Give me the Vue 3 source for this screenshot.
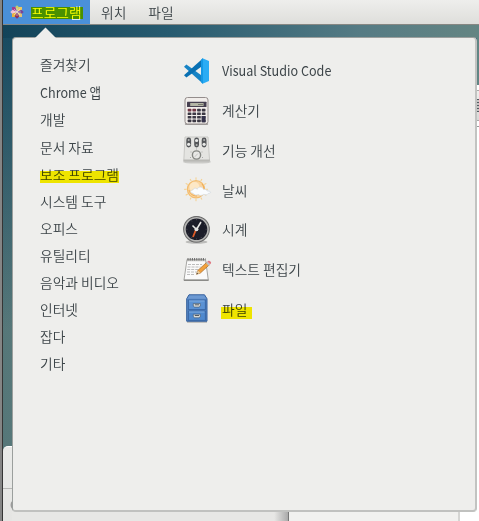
<script setup>
const categories = ['즐겨찾기', 'Chrome 앱', '개발', '문서 자료', '보조 프로그램', '시스템 도구', '오피스', '유틸리티', '음악과 비디오', '인터넷', '잡다', '기타']
const apps = [
  { id: 'code', name: 'Visual Studio Code' },
  { id: 'calc', name: '계산기' },
  { id: 'tweaks', name: '기능 개선' },
  { id: 'weather', name: '날씨' },
  { id: 'clock', name: '시계' },
  { id: 'editor', name: '텍스트 편집기' },
  { id: 'files', name: '파일' },
]
const grid = [0, 1, 2, 3]
const ticks = [0, 30, 60, 90, 120, 150, 180, 210, 240, 270, 300, 330]
const isLatin = (name) => /[A-Za-z]/.test(name)
</script>

<template>
  <div class="screen">
    <div class="edge"></div>
    <header class="topbar">
      <div class="menu-button active">
        <svg class="logo" viewBox="0 0 14 14">
          <path d="M7 .3 9.3 2.6 7 6 4.7 2.6z" fill="#c0d071" />
          <path d="M2 2h3.3L7 7 2 5.3z" fill="#a33d91" />
          <path d="M12 2v3.3L7 7l1.7-5z" fill="#efc95f" />
          <path d="m.3 7 2.3-2.3L7 7 2.6 9.3z" fill="#efc0d2" />
          <path d="m13.7 7-2.3 2.3L7 7l4.4-2.3z" fill="#774597" />
          <path d="M2 12V8.7L7 7l-1.7 5z" fill="#e6b33d" />
          <path d="M12 12H8.7L7 7l5 1.7z" fill="#dfc277" />
          <path d="M7 13.7 4.7 11.4 7 7l2.3 4.4z" fill="#8b3465" />
          <path d="M7 3v8M3 7h8M4 4l6 6M10 4l-6 6" stroke="#f0e7ef" stroke-width=".5" />
        </svg>
        <span class="mark mark-top">프로그램</span>
      </div>
      <span class="menu-button places">위치</span>
      <span class="menu-button">파일</span>
    </header>

    <div class="side-window"><div class="side-line"></div></div>
    <div class="back-window">
      <div class="pane-left"></div>
      <div class="pane-main"></div>
      <div class="pane-right"></div>
    </div>
    <div class="right-window">
      <div class="right-title"></div>
      <div class="right-tool"><i></i></div>
      <div class="right-strip"></div>
    </div>
    <svg class="round-control" viewBox="0 0 10 12"><circle cx="6" cy="6" r="4.8" fill="#ddd" stroke="#999" stroke-width="1.4" /></svg>

    <svg class="arrow" viewBox="0 0 24 12"><path d="M0 12 11.5 .6 23 12z" fill="#eeeeec" /></svg>
    <main class="popup">
      <nav class="categories">
        <div v-for="c in categories" :key="c" class="category">
          <span :class="{ latin: isLatin(c), mark: c === '보조 프로그램', 'mark-category': c === '보조 프로그램' }">{{ c }}</span>
        </div>
      </nav>
      <section class="apps">
        <div v-for="a in apps" :key="a.id" class="app">
          <svg class="icon" viewBox="0 0 30 30">
            <g v-if="a.id === 'code'">
              <path d="M2 10.8 4.4 8.6 21 20.6v7.2z" fill="#1683c5" />
              <path d="m2 19.2 2.4 2.2L21 9.4V2.2z" fill="#0870b3" />
              <path d="m20.5 2.3 6.5 2.8v19.8l-6.5 2.8z" fill="#2bacf4" />
              <path d="m19 3.8 2-1.6v25.6l-2-1.6z" fill="#1598e5" />
            </g>
            <g v-else-if="a.id === 'calc'">
              <rect x="2.8" y="27" width="23.4" height="2" rx="1" fill="#a5a3a2" />
              <rect x="3" y="1.5" width="23" height="26.5" rx="2.5" fill="#f1edea" stroke="#948d8c" />
              <rect x="5" y="5.7" width="19.5" height="5.3" rx=".5" fill="#464050" />
              <rect x="8.2" y="7" width="13.4" height="3" fill="#b3b5a5" />
              <path d="M16 8.5h5" stroke="#77796d" stroke-width="1" />
              <g v-for="r in grid" :key="r">
                <rect v-for="c in grid" :key="c" :x="5.7 + c * 4.7" :y="12.8 + r * 3.6" width="3.7" height="2.6" rx=".6" :fill="r === 0 && c < 2 ? '#703744' : '#3b3843'" />
              </g>
              <rect x="19.6" y="20" width="4" height="6.3" rx=".6" fill="#34324a" />
            </g>
            <g v-else-if="a.id === 'tweaks'">
              <ellipse cx="15" cy="27" rx="14" ry="1.6" fill="#cbcbc8" />
              <path d="M3 2h23l1.6 24H1.8z" fill="#e4e4e1" stroke="#c9c9c6" />
              <path d="M1.6 24.5h26.2v2H1.6z" fill="#b9b9b5" />
              <g fill="#55575a"><rect x="4.3" y="2.5" width="4.8" height="10" rx="2.4" /><rect x="12.2" y="2.5" width="4.8" height="10" rx="2.4" /><rect x="19.7" y="2.5" width="4.8" height="10" rx="2.4" /></g>
              <g fill="#b4b6b5"><circle cx="6.7" cy="5" r="1" /><circle cx="14.6" cy="10" r="1" /><circle cx="22.1" cy="5" r="1" /></g>
              <g fill="#e9eae8"><circle cx="6.7" cy="9.3" r="1.6" /><circle cx="14.6" cy="5.5" r="1.6" /><circle cx="22.1" cy="9.3" r="1.6" /></g>
              <circle cx="14.5" cy="20" r="4.1" fill="#e8e8e6" stroke="#858783" stroke-width="1.4" />
              <path d="m12.8 21.8 3-3.2" stroke="#c5c5c3" />
              <path d="M9 16.5v1m11-1v1M8.5 22v1m12-1v1M14.5 13.5v1" stroke="#aaa" />
            </g>
            <g v-else-if="a.id === 'weather'">
              <g stroke="#f6cf8b" stroke-width="1"><path v-for="t in ticks" :key="t" d="M14 2.4v2.4" :transform="`rotate(${t} 14 14.3)`" /></g>
              <circle cx="14" cy="14.3" r="8.6" fill="#fad6a2" stroke="#f3bd70" stroke-width="1.2" />
              <circle cx="12.5" cy="12" r="5" fill="#fde8c6" />
              <path d="M7 15c.8 4 4 6 8 6M20 9c1.6 2 2 4 1.8 5" fill="none" stroke="#f1ab52" stroke-width="1" />
              <path d="M11 18.2c-3 0-3.2-3 0-3.3.7-2.5 3.8-1.9 4.2-.6 1-3.2 5.6-2.7 6.3.2 2-.6 3.3.4 3.5 1.4 4.5.3 4.7 2.2 1.3 2.5-1 1.8-3 1.6-4.6 1-2 1.5-4.3 1.2-5.3.2-2 .9-4.4.4-5.4-1.4z" fill="#fafcfe" stroke="#cbd3dc" stroke-width=".6" />
            </g>
            <g v-else-if="a.id === 'clock'">
              <ellipse cx="14.5" cy="27" rx="11" ry="1.8" fill="#bcbcba" />
              <circle cx="14.5" cy="14.3" r="12.7" fill="#1c1d29" stroke="#6c6c6c" stroke-width="1.3" />
              <circle cx="14.5" cy="14.3" r="11.6" fill="none" stroke="#b7b7b5" stroke-width="1.6" />
              <g stroke="#5b5b63" stroke-width=".7"><path v-for="t in ticks" :key="t" d="M14.5 4.2v1" :transform="`rotate(${t} 14.5 14.3)`" /></g>
              <path d="m14 14.5-3 7.5" stroke="#df5c29" stroke-width="1.8" />
              <path d="m10.5 10.5 4 4 4.5-7.5" fill="none" stroke="#e8e8e6" stroke-width="1.6" />
              <circle cx="14.5" cy="14.3" r="1.9" fill="#e4e4e2" />
            </g>
            <g v-else-if="a.id === 'editor'">
              <path d="M5 4.5h18.5L26.3 25H2z" fill="#fafafa" stroke="#a6a6a3" />
              <path d="M1.8 25.3h24.8" stroke="#8b8b88" stroke-width="1.4" />
              <path d="M5 5.5h18.5" stroke="#c4c4c1" stroke-width="1.5" />
              <path d="M5.5 4.2h18" stroke="#666" stroke-width="2.4" stroke-dasharray="1 1.2" />
              <path d="M6 9.5h14M5.5 12h13M5.2 14.5h11M5 17h10M5 19.5h8" stroke="#b5b5b5" stroke-width=".9" stroke-dasharray="3 1" />
              <path d="m14.5 19.3 1.5-4 8.8-8 2.6 2.5-9 8.2z" fill="#f2a13d" stroke="#a46c31" stroke-width=".7" />
              <path d="m14.5 19.3 1.4-3.7 2.4 2.4z" fill="#ead0a4" />
              <path d="m14.5 19.3.6-1.6 1 1z" fill="#333" />
              <path d="m24 8 1.4-1.4 2.8 2.6-1.5 1.5z" fill="#bcc1c7" />
              <path d="m25.3 6.6.8-.7c1.2-1 3.8 1.1 2.8 2.5l-.8.8z" fill="#df7882" />
            </g>
            <g v-else>
              <path d="M5 28h20" stroke="#adadab" stroke-width="1.4" />
              <path d="M7 .8h15.5l2.5 4v22.4H4.7V4.8z" fill="#5788c7" stroke="#345f9b" />
              <path d="M7.4 1.4h14.8l2 3.4h-19z" fill="#6c99d2" />
              <rect x="6.4" y="6" width="17" height="9.6" fill="#5b92d4" stroke="#3a68a6" />
              <rect x="6.4" y="17" width="17" height="9.4" fill="#4f89ce" stroke="#3a68a6" />
              <path d="M7 7h15.5M7 18h15.5" stroke="#7eabde" />
              <g fill="#d9dbd8" stroke="#3d5269" stroke-width=".6"><path d="M11.3 9.5h7v2.6l-1.3 1h-4.4l-1.3-1z" /><path d="M11.3 20.2h7v2.6l-1.3 1h-4.4l-1.3-1z" /></g>
              <path d="M12.8 10.8H17m-4.2 10.7H17" stroke="#555c63" />
            </g>
          </svg>
          <span :class="{ latin: isLatin(a.name), mark: a.id === 'files', 'mark-file': a.id === 'files' }">{{ a.name }}</span>
        </div>
      </section>
    </main>
  </div>
</template>

<style>
body { margin: 0; overflow: hidden; }
</style>
<style scoped>
.screen { position: relative; width: 479px; height: 521px; overflow: hidden; font-family: "Noto Sans CJK KR", sans-serif; font-size: 13.75px; font-weight: 350; line-height: 20px; color: #3d4549; background: linear-gradient(180deg, #164960 25px, transparent 330px), linear-gradient(90deg, #567779, #69918f); }
.screen::before { content: ''; position: absolute; inset: 24px 0 auto 3px; height: 14px; background: linear-gradient(90deg, #134359, #275b70 35%, #557b84 75%, #648583); }
.screen::after { content: ''; position: absolute; left: 477px; top: 25px; width: 2px; height: 60px; background: #618584; }
.edge { position: absolute; z-index: 8; left: 0; top: 0; width: 2px; height: 521px; background: #858585; border-right: 1px solid #353535; }
.topbar { position: relative; box-sizing: border-box; height: 25px; padding-left: 3px; display: flex; border-bottom: 1px solid #868783; background: linear-gradient(#eeeeec, #dededb); }
.menu-button { display: flex; align-items: center; height: 23px; }
.active { box-sizing: border-box; height: 24px; padding-bottom: 1px; width: 87px; padding-left: 7px; gap: 7px; background: #4a90d9; color: white; }
.places { margin-left: 11px; margin-right: 22px; }
.logo { width: 14px; height: 14px; }
.latin { display: inline-block; font-weight: 400; transform: scaleX(.915); transform-origin: left center; }
.mark { position: relative; }
.mark::after { content: ''; position: absolute; mix-blend-mode: multiply; background: #fff500; }
.mark-top::after { left: 0; right: -1px; top: 5px; height: 12px; background: #ff0; }
.mark-category::after { left: 0; right: 0; top: 7px; height: 12px; }
.mark-file::after { left: -1px; right: -5px; top: 8px; height: 12px; }
.arrow { position: absolute; z-index: 4; left: 34px; top: 27px; width: 24px; height: 12px; }
.popup { position: absolute; z-index: 3; box-sizing: border-box; left: 12px; top: 37px; width: 465px; height: 475px; border: 1px solid #9b9f9d; border-right: 2px solid #c2c3c1; border-bottom: 2px solid #c0c1bf; border-radius: 4px; background: #eeeeec; display: flex; padding-left: 27px; }
.categories { width: 142px; padding-top: 12px; }
.category { height: 27.1px; display: flex; align-items: center; white-space: nowrap; }
.category:first-child { margin-bottom: 1.7px; }
.apps { padding-top: 13px; }
.app { height: 39.75px; display: flex; align-items: center; gap: 10px; white-space: nowrap; }
.app > span { margin-top: -1px; }
.icon { width: 30px; height: 30px; }
.side-window { position: absolute; left: 3px; top: 446px; width: 30px; height: 75px; border-top-left-radius: 5px; background: linear-gradient(#e9eae8, #e5e5e3); border-top: 1px solid #fff; box-sizing: border-box; padding-top: 41px; }
.side-line { border-top: 1px solid #b8b8b6; }
.back-window { position: absolute; left: 12px; top: 505px; right: 0; height: 16px; display: flex; }
.pane-left { box-sizing: border-box; width: 277px; background: linear-gradient(90deg, #e7e7e5 95%, #aaa); border-right: 1px solid #777; }
.pane-main { box-sizing: border-box; width: 171px; background: #f1f1ef; border-right: 2px solid #d5d5d3; }
.pane-right { flex: 1; background: white; }
.right-window { position: absolute; left: 474px; top: 85px; width: 5px; height: 436px; background: white; }
.right-title { height: 5px; background: #fff; border-bottom: 1px solid #aaa; }
.right-tool { height: 29px; background: linear-gradient(#eeeeec, #d9d9d7); display: flex; align-items: center; }
.right-tool i { width: 5px; height: 13px; background: repeating-linear-gradient(#555c62 0 1px, #c5c5c3 1px 3px); }
.right-strip { height: 5px; border-top: 1px solid #aaa; border-bottom: 1px solid #999; }
.round-control { position: absolute; left: 10px; top: 499px; width: 10px; height: 12px; }
</style>
